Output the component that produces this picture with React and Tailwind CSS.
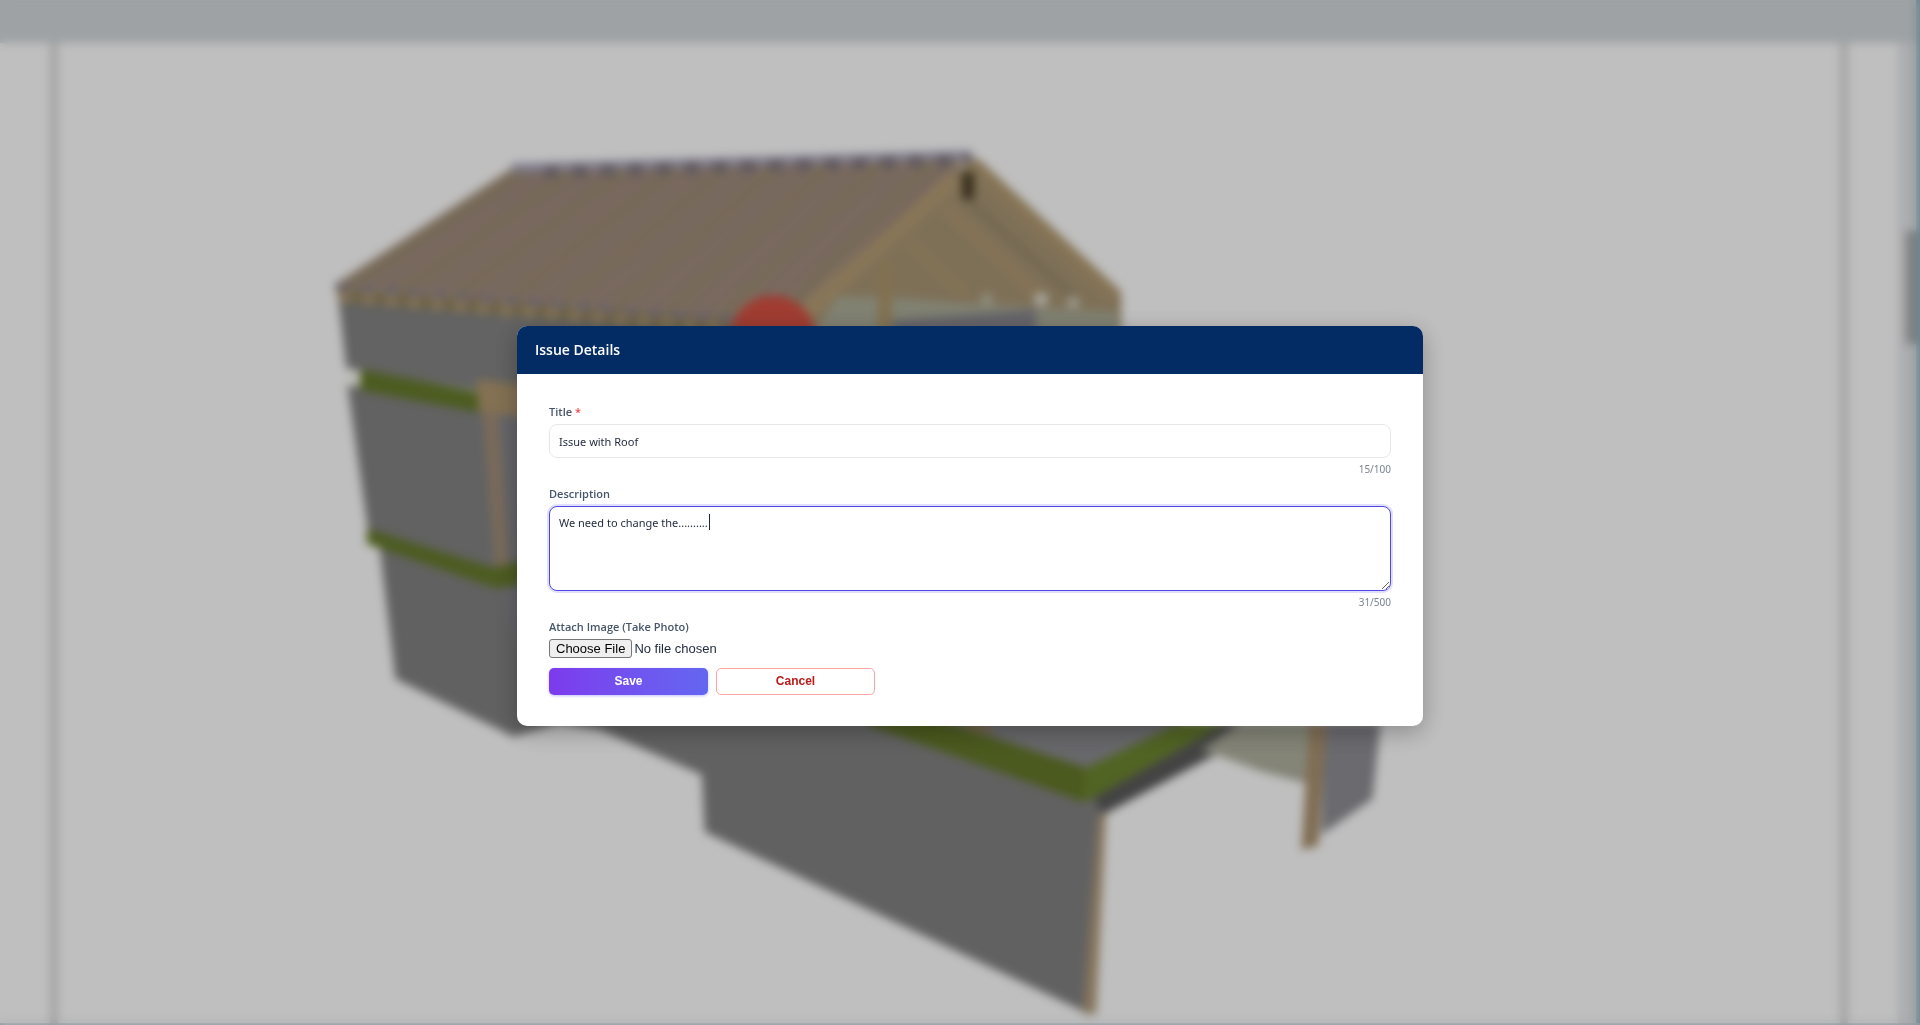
import React, { useState } from 'react';

const roofRibs = Array.from({ length: 26 }, (_, i) => ({
  x1: 530 + i * 17,
  y1: 168 - i * 0.5,
  x2: 350 + i * 17.5,
  y2: 286 + i * 1.6,
}));

const BuildingModel = () => (
  <svg viewBox="0 0 1782 979" preserveAspectRatio="xMidYMin slice" className="w-full h-full" aria-hidden="true">
    <g transform="translate(-58 -43)">
      {/* left walls */}
      <polygon points="338,290 560,312 740,325 740,420 517,397 347,368" fill="#848484" />
      <polygon points="348,385 530,412 530,580 369,532" fill="#838383" />
      <polygon points="380,545 530,580 1000,560 1091,790 1104,812 1091,1014 705,831 702,774 600,729 560,722 514,736 396,678" fill="#828282" />
      <polygon points="1000,600 1180,700 1180,728 1090,772 950,724" fill="#8b8b90" />
      <polygon points="493,400 540,400 540,720 501,590" fill="#87878d" />
      <ellipse cx="353" cy="377" rx="6" ry="5" fill="#f8f8ec" />

      {/* green rings */}
      <polygon points="361,369 480,392 480,412 360,390" fill="#667b2b" />
      <polygon points="368,528 493,567 530,558 530,583 497,588 367,543" fill="#667b2b" />
      <polygon points="860,698 957,725 1086,767 1083,801 870,725" fill="#647828" />
      <polygon points="1086,767 1180,722 1226,722 1093,798 1083,801" fill="#6d862f" />
      <polygon points="1094,797 1226,722 1275,722 1213,755 1103,814" fill="#5a5a5a" />
      <polygon points="957,722 988,722 994,731 970,728" fill="#a4835a" />

      {/* door frame */}
      <polygon points="477,379 540,387 540,419 479,411" fill="#b0976f" />
      <polygon points="483,411 499,413 509,565 496,566" fill="#a38f78" />

      {/* roof */}
      <polygon points="336,286 800,323 800,338 341,302" fill="#93835f" />
      <line x1="340" y1="296" x2="760" y2="331" stroke="#ad9872" strokeWidth="12" strokeDasharray="12 11" />
      <polygon points="334,285 512,168 970,155 957,170 806,302 790,323" fill="#a99480" />
      {roofRibs.map((rib, i) => (
        <line key={i} x1={rib.x1} y1={rib.y1} x2={rib.x2} y2={rib.y2} stroke={i % 3 === 0 ? '#998a70' : '#9c877d'} strokeWidth="7" />
      ))}
      <line x1="512" y1="168" x2="972" y2="155" stroke="#aaa5bb" strokeWidth="9" />
      <line x1="545" y1="172" x2="972" y2="160" stroke="#80777f" strokeWidth="11" strokeDasharray="14 14" />
      <line x1="336" y1="286" x2="760" y2="321" stroke="#8f8590" strokeWidth="7" strokeDasharray="16 8" />

      {/* gable */}
      <polygon points="957,170 976,158 1121,294 1121,332 785,332 806,300" fill="#a99675" />
      <polyline points="955,178 830,290 795,327" fill="none" stroke="#b79e76" strokeWidth="16" />
      <line x1="974" y1="164" x2="1116" y2="296" stroke="#b39b72" strokeWidth="14" />
      <line x1="945" y1="207" x2="1040" y2="297" stroke="#b59b72" strokeWidth="8" />
      <line x1="908" y1="242" x2="965" y2="294" stroke="#b39a70" strokeWidth="7" />
      <line x1="965" y1="197" x2="1075" y2="298" stroke="#998a6c" strokeWidth="7" />
      <polygon points="838,296 885,297 960,303 1118,312 1118,334 812,334" fill="#acad98" />
      <polygon points="893,320 1036,309 1036,334 893,334" fill="#86868e" />
      <rect x="878" y="262" width="14" height="70" fill="#ad976c" />
      <rect x="962" y="172" width="12" height="27" fill="#4c4128" />
      <circle cx="987" cy="299" r="6" fill="#c0bda8" />
      <circle cx="1041" cy="299" r="7" fill="#e0ddd0" />
      <circle cx="1073" cy="302" r="6" fill="#d2cfbf" />
      <circle cx="773" cy="338" r="43" fill="#d65143" />

      {/* right side */}
      <polygon points="1200,750 1240,722 1312,722 1308,783 1262,771 1213,753" fill="#b0b19f" />
      <polygon points="1324,722 1380,722 1372,798 1321,834" fill="#8e8e94" />
      <polygon points="1309,722 1326,722 1318,845 1301,849" fill="#ab9270" />
      <polygon points="1098,815 1106,812 1096,1013 1083,1013" fill="#b39c7c" />
    </g>
  </svg>
);

const ViewerPage = () => (
  <div className="h-full flex flex-col bg-[#c3cdd8] pb-0.5">
    <div className="h-[43px] shrink-0 flex bg-[#d3d9dc]">
      <div className="flex-1" />
      <div className="w-1 bg-[#93b4c1]" />
    </div>
    <div className="flex-1 min-h-0 flex bg-white">
      <div className="w-[50px] bg-white" />
      <div className="w-2 bg-[#dadada]" />
      <div className="flex-1 min-w-0 bg-white">
        <BuildingModel />
      </div>
      <div className="w-2 bg-[#dadada]" />
      <div className="w-[50px] bg-white" />
      <div className="w-[18px] bg-[#e6e7ea] pt-[188px] pl-2">
        <div className="h-[113px] bg-[#a9abac]" />
      </div>
      <div className="w-1 bg-[#93b4c1]" />
    </div>
  </div>
);

const labelStyle = 'block text-[11px] leading-4 font-semibold text-[#475569]';
const fieldStyle = "block w-full rounded-lg border bg-white px-[9px] text-[11px] leading-4 text-[#1e293b] outline-none font-['Noto_Sans',sans-serif]";
const counterStyle = "pt-[3px] text-right text-[10px] leading-4 text-[#7b8494] font-['Noto_Sans',sans-serif]";

const IssueDialog = () => {
  const [title, setTitle] = useState('Issue with Roof');
  const [description, setDescription] = useState('We need to change the..........');

  return (
    <div
      role="dialog"
      aria-labelledby="issue-heading"
      className="w-full max-w-[906px] rounded-[10px] overflow-hidden bg-white shadow-[0_6px_24px_rgba(0,0,0,0.28)] font-['Open_Sans','Noto_Sans',sans-serif]"
    >
      <div className="h-12 px-[18px] flex items-center bg-[#042c64]">
        <h2 id="issue-heading" className="text-sm leading-5 font-semibold text-white">Issue Details</h2>
      </div>
      <form className="px-8 pt-[30px] pb-[31px]" onSubmit={(e) => e.preventDefault()}>
        <label htmlFor="issue-title" className={labelStyle}>
          Title <span className="text-[#ef4444]">*</span>
        </label>
        <input
          id="issue-title"
          type="text"
          maxLength={100}
          value={title}
          onChange={(e) => setTitle(e.target.value)}
          className={`${fieldStyle} mt-1 h-[34px] border-[#e5e7eb]`}
        />
        <div className={counterStyle}>{title.length}/100</div>

        <label htmlFor="issue-description" className={`${labelStyle} mt-[9px]`}>Description</label>
        <div className="relative mt-1">
          <textarea
            id="issue-description"
            maxLength={500}
            value={description}
            onChange={(e) => setDescription(e.target.value)}
            className={`${fieldStyle} h-[85px] py-2 resize-y border-[#4f46e5] shadow-[0_0_0_2px_rgba(99,102,241,0.2)]`}
          />
          <span className="absolute left-[160px] top-2 h-4 w-px bg-[#1e293b]" />
        </div>
        <div className={counterStyle}>{description.length}/500</div>

        <label htmlFor="issue-photo" className={`${labelStyle} mt-[9px]`}>Attach Image (Take Photo)</label>
        <input
          id="issue-photo"
          type="file"
          accept="image/*"
          className="block mt-1 h-[19px] font-['Liberation_Sans',Arial,sans-serif] text-[13px] leading-[17px] text-[#1e293b] file:mr-0.5 file:h-[19px] file:rounded-[3px] file:border file:border-solid file:border-[#767676] file:bg-[#efefef] file:px-[6px] file:text-black"
        />

        <div className="mt-[10px] flex gap-2 font-['Liberation_Sans',Arial,sans-serif] text-xs leading-4 font-bold">
          <button
            type="submit"
            className="w-[159px] h-[27px] pb-0.5 rounded-[5px] bg-linear-to-r from-[#7c3aed] to-[#6366f1] text-white shadow-[0_1px_3px_rgba(99,102,241,0.4)]"
          >
            Save
          </button>
          <button type="button" className="w-[159px] h-[27px] pb-0.5 rounded-[5px] border border-[#fca5a5] bg-white text-[#b91c1c]">
            Cancel
          </button>
        </div>
      </form>
    </div>
  );
};

export default function App() {
  return (
    <div className="relative h-screen overflow-hidden">
      <ViewerPage />
      <div className="absolute inset-0 flex items-center justify-center pl-5 pt-[27px] bg-black/25 backdrop-blur-[5px]">
        <IssueDialog />
      </div>
    </div>
  );
}
